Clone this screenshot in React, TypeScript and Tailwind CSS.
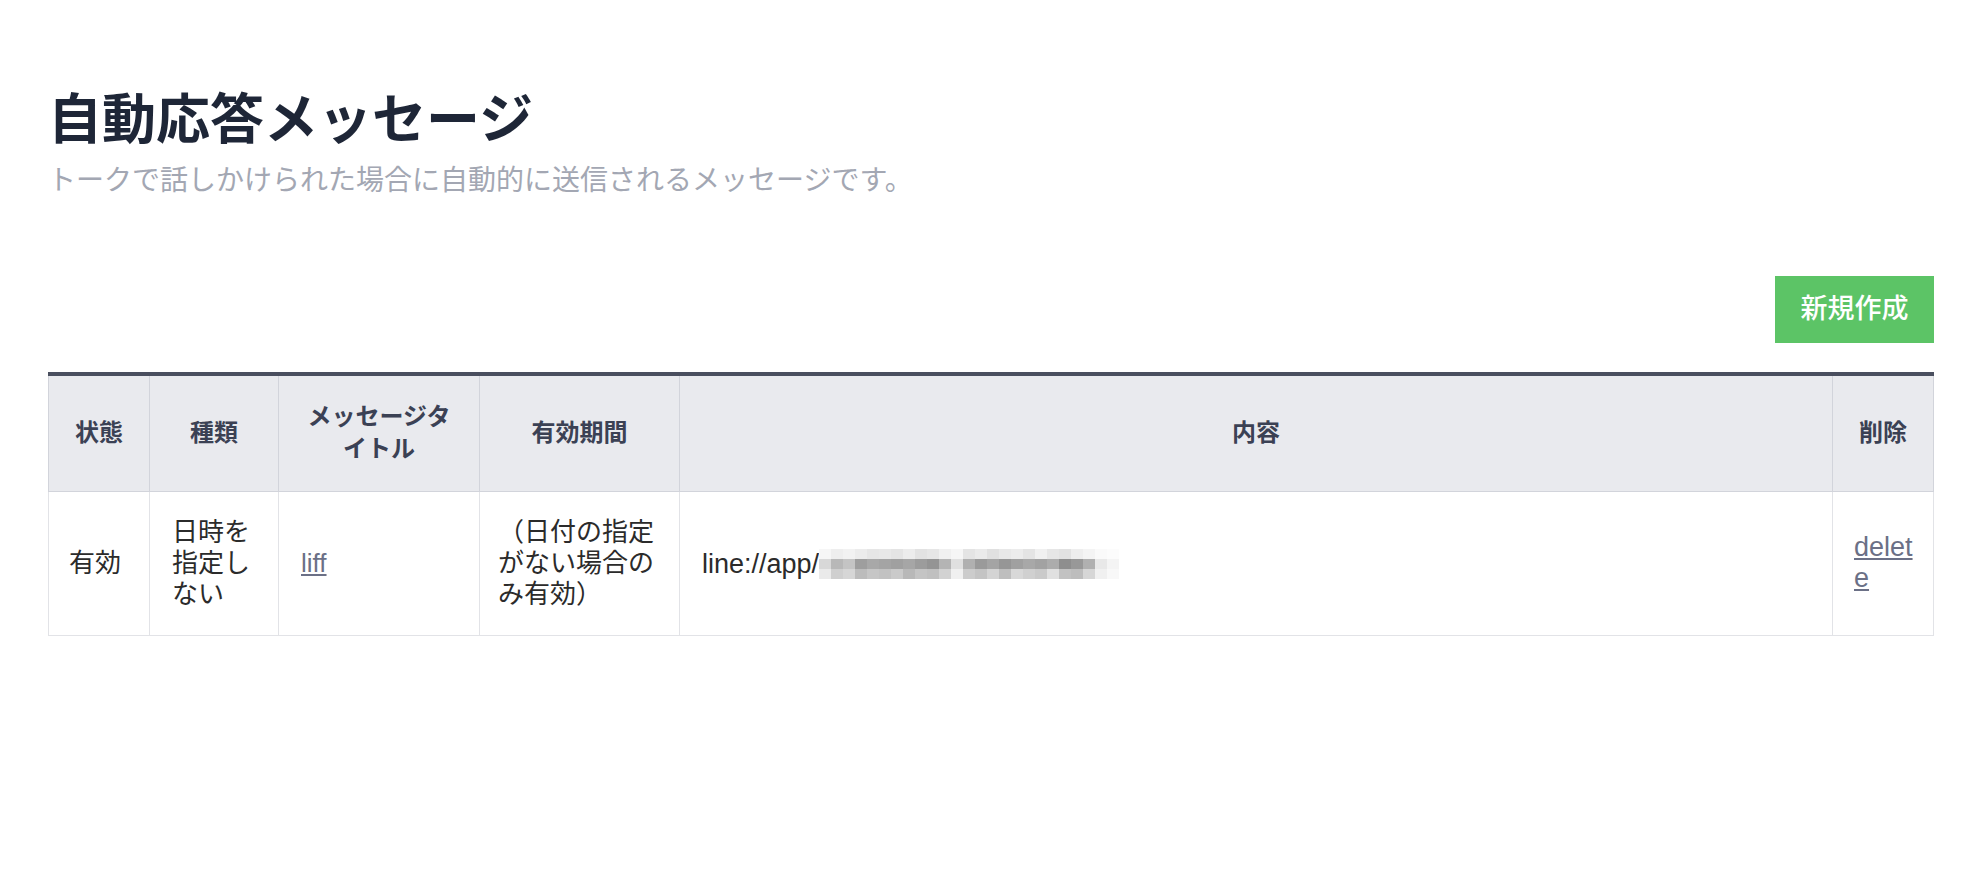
const mosaic = [
  "f6f6f6 eeeeee f2f2f2 ececec e6e6e6 e8e8e8 e4e4e4 ececec e2e2e2 e6e6e6 f0f0f0 f6f6f6 e4e4e4 eaeaea e0e0e0 e8e8e8 ececec e4e4e4 f0f0f0 e6e6e6 e2e2e2 eeeeee f4f4f4 fafafa fcfcfc",
  "d8d8d8 b8b8b8 c4c4c4 9e9e9e a8a8a8 a4a4a4 a0a0a0 a6a6a6 9c9c9c 949494 b4b4b4 e0e0e0 b0b0b0 9a9a9a a4a4a4 969696 a0a0a0 a8a8a8 a2a2a2 acacac 8e8e8e 989898 b0b0b0 e8e8e8 f4f4f4",
  "eaeaea cfcfcf d6d6d6 bcbcbc c6c6c6 c2c2c2 cacaca b8b8b8 c4c4c4 c0c0c0 d2d2d2 f0f0f0 cccccc c4c4c4 d4d4d4 bebebe d8d8d8 d0d0d0 cacaca e0e0e0 c2c2c2 bdbdbd d6d6d6 f0f0f0 f8f8f8",
];

function Mosaic() {
  return (
    <span className="inline-flex flex-col align-middle">
      {mosaic.map((row, i) => (
        <span key={i} className="flex">
          {row.split(" ").map((c, j) => (
            <span key={j} className="block w-[12px] h-[10px]" style={{ backgroundColor: "#" + c }} />
          ))}
        </span>
      ))}
    </span>
  );
}

export default function App() {
  const font = { fontFamily: '"Liberation Sans", "Noto Sans CJK JP", sans-serif' };

  return (
    <div className="min-h-screen bg-white px-[48px] pt-[89px]" style={font}>
      <h1 className="text-[54px] leading-[62px] font-bold text-[#1e2637]">自動応答メッセージ</h1>
      <p className="mt-[12px] text-[28px] leading-[36px] text-[#a3a7b3]">
        トークで話しかけられた場合に自動的に送信されるメッセージです。
      </p>

      <div className="mt-[77px] flex justify-end">
        <button className="w-[159px] h-[67px] bg-[#5cc466] text-white text-[27px] font-medium">新規作成</button>
      </div>

      <table className="mt-[29px] w-full table-fixed border-collapse border-t-4 border-[#4a4f5f]">
        <colgroup>
          <col className="w-[101px]" />
          <col className="w-[129px]" />
          <col className="w-[201px]" />
          <col className="w-[200px]" />
          <col />
          <col className="w-[101px]" />
        </colgroup>
        <thead>
          <tr className="h-[117px] bg-[#e9eaee] text-[#3b4154] text-[24px] leading-[32px] font-bold">
            <th className="border border-t-0 border-[#d2d4db] px-[20px]">状態</th>
            <th className="border border-t-0 border-[#d2d4db] px-[20px]">種類</th>
            <th className="border border-t-0 border-[#d2d4db] px-[20px]">メッセージタイトル</th>
            <th className="border border-t-0 border-[#d2d4db] px-[20px]">有効期間</th>
            <th className="border border-t-0 border-[#d2d4db] px-[20px]">内容</th>
            <th className="border border-t-0 border-[#d2d4db] px-[20px]">削除</th>
          </tr>
        </thead>
        <tbody>
          <tr className="h-[144px] text-[26px] leading-[31px] text-[#2b2b2b]">
            <td className="border border-[#e2e3e7] px-[20px] text-left">有効</td>
            <td className="border border-[#e2e3e7] px-[22px] text-left">日時を指定しない</td>
            <td className="border border-[#e2e3e7] px-[22px] text-left">
              <a href="#" className="underline text-[#6b7086]">liff</a>
            </td>
            <td className="border border-[#e2e3e7] px-[18px] text-left">（日付の指定がない場合のみ有効）</td>
            <td className="border border-[#e2e3e7] px-[22px] text-left whitespace-nowrap">
              <span className="align-middle text-[27px]">line://app/</span>
              <Mosaic />
            </td>
            <td className="border border-[#e2e3e7] pl-[21px] pr-[16px] text-left break-all">
              <a href="#" className="underline text-[#6b7086] text-[27px]">delete</a>
            </td>
          </tr>
        </tbody>
      </table>
    </div>
  );
}
